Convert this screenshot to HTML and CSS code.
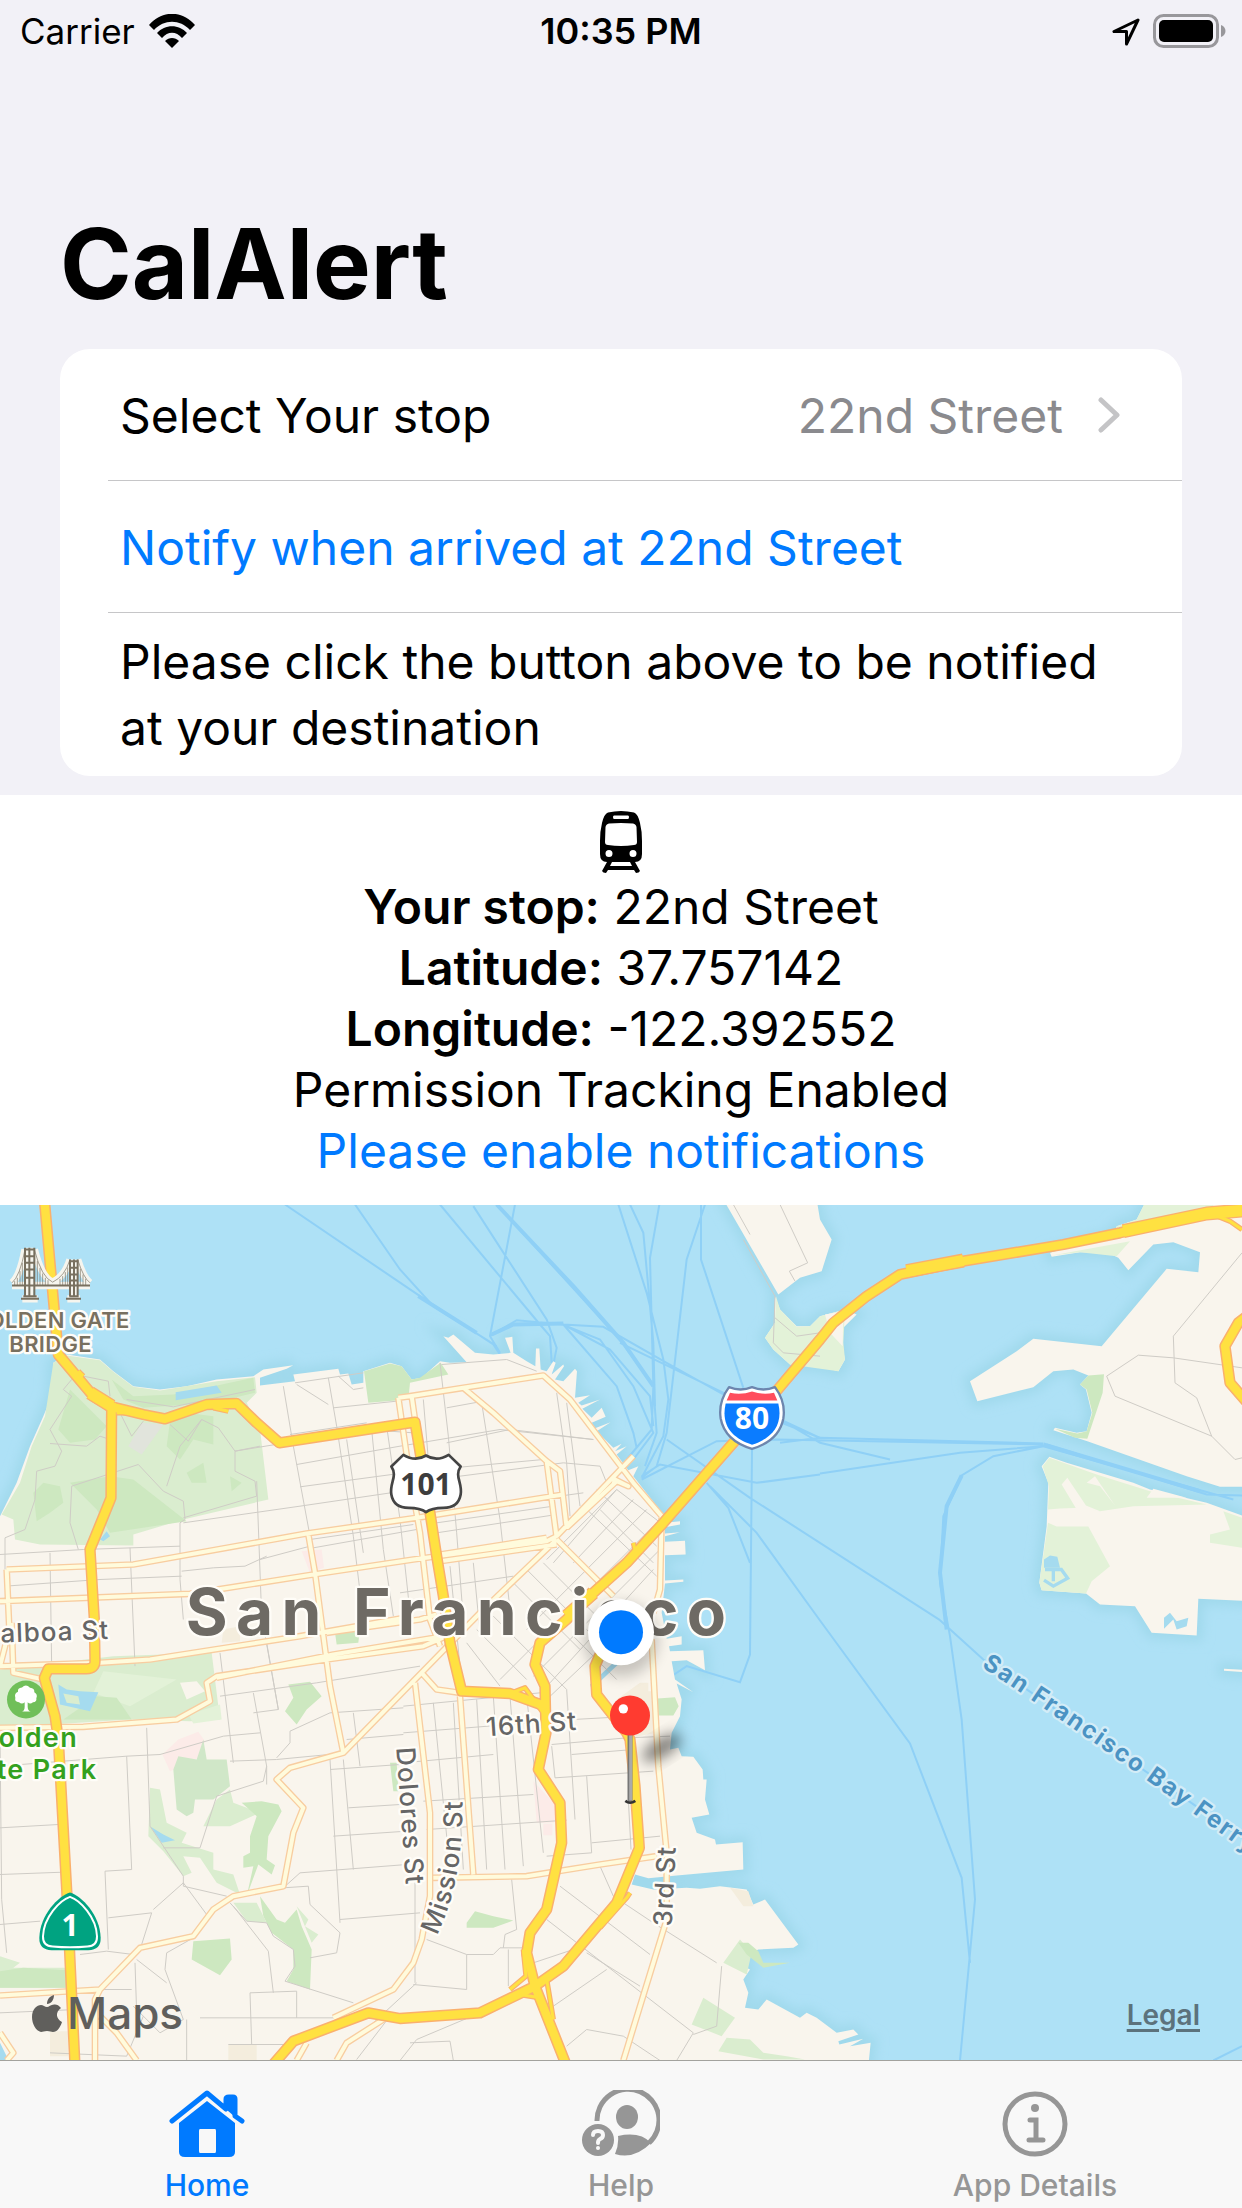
FILE: index.html
```html
<!DOCTYPE html>
<html lang="en">
<head>
<meta charset="utf-8">
<meta name="viewport" content="width=device-width, initial-scale=1">
<title>CalAlert</title>
<link rel="stylesheet" href="styles.css">
</head>
<body>
<div class="app">
  <header class="status-bar">
    <div class="status-left">
      <span>Carrier</span>
      <svg class="wifi" viewBox="0 0 46 34" aria-hidden="true">
        <path d="M0 11C13-4 33-4 46 11L41 16C31 5 15 5 5 16Z"/>
        <path d="M8 19C16 10 30 10 38 19L33 24C27 17 19 17 13 24Z"/>
        <path d="M16 27C20 23 26 23 30 27L23 34Z"/>
      </svg>
    </div>
    <time class="status-time">10:35 PM</time>
    <div class="status-right">
      <svg class="location" viewBox="0 0 29 29" aria-hidden="true"><path d="M26 3 2 14.500H14.500V27Z"/></svg>
      <svg class="battery" viewBox="0 0 73 34" aria-hidden="true">
        <rect class="battery-shell" x="1.500" y="1.500" width="63" height="31" rx="9"/>
        <rect x="6" y="6" width="54" height="22" rx="5"/>
        <path class="battery-tip" d="M68 11C74 13 74 21 68 23Z"/>
      </svg>
    </div>
  </header>

  <main class="content">
    <section class="form-area">
      <h1>CalAlert</h1>
      <div class="card">
        <a class="row row-link" href="#stops">
          <span>Select Your stop</span>
          <span class="row-value">22nd Street
            <svg class="chevron" viewBox="0 0 22 36" aria-hidden="true"><path d="M3 3 19 18 3 33"/></svg>
          </span>
        </a>
        <button class="row row-action" type="button">Notify when arrived at 22nd Street</button>
        <p class="row row-note">Please click the button above to be notified at your destination</p>
      </div>
    </section>

    <section class="details">
      <svg class="train" viewBox="0 0 42 62" aria-hidden="true">
        <path fill-rule="evenodd" d="M8 1.500Q21-1.500 34 1.500Q38 3 40 12Q42 20 42 30V43Q42 51 35 51L40 60Q39 62 36 62L34 59H8L6 62Q3 62 2 60L7 51Q0 51 0 43V30Q0 20 2 12Q4 3 8 1.500ZM14 4.500Q13 4.500 13 6Q13 8 14 8H28Q29 8 29 6Q29 4.500 28 4.500ZM9 12.500Q6 13 5.500 16L5 31Q5 34 8 34Q21 36 34 34Q37 34 37 31L36.500 16Q36 13 33 12.500Q21 11.500 9 12.500ZM9 39A3.500 3.500 0 1 0 9 46A3.500 3.500 0 1 0 9 39ZM33 39A3.500 3.500 0 1 0 33 46A3.500 3.500 0 1 0 33 39ZM12 51 10 55H32L30 51Z"/>
      </svg>
      <p><b>Your stop:</b> 22nd Street</p>
      <p><b>Latitude:</b> 37.757142</p>
      <p><b>Longitude:</b> -122.392552</p>
      <p>Permission Tracking Enabled</p>
      <button class="text-button" type="button">Please enable notifications</button>
    </section>

    <section class="map" aria-label="Map">
      <svg class="map-canvas" viewBox="0 15 3726 2568" preserveAspectRatio="xMidYMid slice" role="img" aria-label="Map of San Francisco">
        <defs>
          <filter id="coast" x="-5%" y="-5%" width="110%" height="110%"><feGaussianBlur stdDeviation="16"/></filter>
          <filter id="soft" x="-60%" y="-60%" width="220%" height="220%"><feGaussianBlur stdDeviation="20"/></filter>
          <path id="land" d="M0 950 50 850 90 740 130 650 155 590 160 490 200 465 300 480 340 515 400 560 480 570 560 560 650 540 760 530 790 510 880 497 860 508 780 535 780 558 885 545 880 525 1015 508 1020 525 1045 522 1055 555 1090 550 1090 515 1170 490 1205 500 1235 540 1265 535 1320 485 1350 490 1400 488 1330 410 1345 415 1360 405 1425 460 1480 465 1532 460 1515 415 1537 412 1540 460 1580 485 1606 500 1608 447 1618 447 1622 510 1640 515 1660 485 1667 490 1655 525 1690 495 1692 500 1665 540 1690 545 1725 508 1731 515 1725 595 1770 587 1735 610 1745 618 1800 600 1747 628 1775 655 1805 625 1817 652 1775 670 1785 686 1832 668 1790 695 1840 745 1865 733 1845 755 1880 740 1850 765 1885 812 1915 800 1900 830 1990 945 1995 970 2040 965 2040 975 1995 983 1995 1002 2040 998 1995 1010 1995 1027 2055 1024 2057 1065 1995 1067 1995 1143 2050 1140 2050 1147 1995 1152 1985 1240 2000 1318 2045 1310 2045 1335 2007 1340 2010 1355 2110 1352 2115 1412 2060 1382 2015 1385 2025 1440 2080 1478 2030 1452 2045 1500 2040 1550 2015 1600 2010 1650 2035 1645 2045 1670 2080 1672 2108 1710 2110 1740 2120 1740 2115 1800 2128 1845 2075 1855 2090 1900 2145 1920 2148 1935 2228 1928 2230 2010 2030 2028 1945 2036 1905 2025 1895 2055 1960 2070 2060 2065 2100 2068 2160 2060 2240 2070 2260 2115 2295 2100 2395 2235 2380 2245 2275 2250 2235 2270 2210 2290 2250 2310 2230 2340 2245 2380 2235 2425 2275 2430 2300 2400 2400 2455 2420 2440 2450 2455 2510 2500 2560 2490 2575 2505 2515 2525 2518 2535 2590 2518 2550 2540 2612 2530 2605 2600-60 2600-60 950ZM2170 0 2450 0 2460 60 2495 120 2465 215 2400 235 2335 285ZM2325 290 2340 330 2390 380 2430 380 2460 350 2535 330 2570 345 2530 385 2525 430 2535 480 2515 515 2460 500 2370 495 2320 450 2295 415 2325 370ZM3440 0 3410 60 3350 80 3340 105 3150 160 3155 172 3240 158 3320 158 3355 175 3385 212 3460 135 3520 128 3600 158 3595 218 3500 208 3305 440 3100 418 3050 455 2910 545 2932 605 3100 563 3160 515 3220 510 3265 528 3240 555 3258 570 3275 640 3260 695 3230 700 3165 685 3160 692 3262 725 3560 830 3660 862 3760 862 3760 0ZM3148 772 3200 790 3400 850 3450 870 3620 910 3760 960 3760 1205 3595 1198 3590 1308 3455 1300 3405 1220 3300 1215 3258 1182 3125 1172 3118 1150 3140 980 3145 850 3125 800ZM3672 1408 3760 1412V1420L3672 1414Z"/>
        </defs>
        <rect class="water" width="3726" height="2600"/>
        <use href="#land" class="coast-shade" filter="url(#coast)"/>

        <g class="ferry">
          <path d="M855 15 1260 290 1480 435 1500 465M1065 15 1200 210 1300 320 1490 440M1320 15 1620 375 1650 410 1655 490M1420 20 1640 360 1670 445 1655 520M1545 15 1470 410 1500 460M1470 410 1550 362 1690 375 1810 382 2000 490 2170 585M1490 15 1860 420 1960 560 1970 700 1935 800M1690 375 1830 450 1950 590 1960 680M1690 375 1850 560 1900 700 1910 745M1700 380 1800 420 1900 560 1960 700 1900 780M1860 430 2160 575 2460 715M1855 15 1940 280 1990 480 2005 600 1990 710 1925 835M1890 15 1930 100 1960 430 1965 620M1978 15 1950 175 1960 560 1955 690 1880 780M2103 15 2103 180 2230 565M2115 15 2060 180 2000 700 1970 800 1925 835M1925 840 2150 725 2330 720 3130 735M1925 830 1980 795 2270 850 2460 825M2000 720 2250 895 2820 1262M2120 850 2185 925 2250 1090M2130 860 2270 1000 2460 1263 2730 1632 2885 2035 2910 2290M2256 750 2250 1365 2220 1448 2060 1400 2000 1440M2340 730 2460 715 3130 732M2340 660 2460 730 2670 780M2320 660 2460 715M2460 822 2880 760 3130 740M3140 735 3620 885 3726 888M3130 740 3700 900M3130 740 2980 770 2885 828 2830 950 2820 1150 2850 1310 2885 1560 2925 2100 2880 2583M2820 1262 2950 1380M2950 1380 3726 1915M3640 2583 3726 2540"/>
          <path class="ferry-wide" d="M1490 15 1720 260 1870 430 1960 560M1255 290 1430 400M1475 405 1540 375 1690 372M3130 735 3600 875M2885 828 2840 920 2820 1120 2840 1290"/>
        </g>

        <use href="#land" class="land"/>

        <g class="park">
          <path class="g1" d="M45 1020 40 960 5 945 60 850 95 740 135 650 160 490 200 468 300 482 340 517 400 562 480 573 650 545 765 533 770 580 740 610 780 690 805 900 550 960 400 1005V1038L120 1035Z"/>
          <path class="g2" d="M1092 515 1170 492 1205 500 1235 540 1260 535 1322 490 1345 525 1230 550 1225 600 1105 610Z"/>
          <path class="g2" d="M210 570 260 620 320 680 285 720 210 730 175 690ZM510 665 560 640 640 650 640 735 580 720 540 780 500 740ZM210 850 330 830 400 840 560 965 330 1000 290 930ZM100 880 130 850 180 860 190 910 150 940 110 965ZM335 540 400 590 520 585 640 560 760 535 765 580 640 610 430 625 370 600ZM560 820 610 790 620 850 575 850ZM690 830 725 850 695 875Z"/>
          <path class="gray" d="M385 740 425 670 490 675 425 765Z"/>
          <path class="pool" d="M527 578 650 558 665 580 527 602ZM300 1020 320 995 330 1010 310 1025Z"/>
          <path class="g1" d="M0 1410 340 1370 635 1360 660 1560 570 1565 390 1560 0 1585Z"/>
          <path class="g4" d="M310 1415 530 1440 390 1520 280 1480ZM565 1545 660 1515 665 1560 580 1572Z"/>
          <path class="land" d="M540 1450 590 1445 615 1475 560 1500Z"/>
          <path class="g2" d="M190 1560 290 1490 350 1495 395 1560Z"/>
          <path class="pool" d="M175 1455 200 1470 240 1475 295 1478 270 1535 180 1515Z"/>
          <path class="g1" d="M190 1482 235 1490 240 1515 200 1510Z"/>
          <path class="g2" d="M865 1455 930 1447 965 1490 920 1530 890 1575 855 1535 880 1495ZM1005 1300 1080 1285 1075 1330 1010 1335ZM1170 1690 1190 1690 1195 1775 1180 1775ZM580 2225 690 2217 695 2280 660 2327 575 2280ZM1400 2170 1425 2135 1480 2150 1540 2163 1480 2185 1400 2185Z"/>
          <path class="pink" d="M487 1665 535 1620 595 1597 615 1625 595 1675 510 1715ZM905 1055 965 1050 972 1105 930 1120ZM1600 1745 1680 1830 1662 1870 1610 1870ZM1630 1873H1657V1907H1630Z"/>
          <path class="g3" d="M520 1710 535 1670 590 1680 610 1620 620 1680 680 1680 690 1760 640 1800 585 1800 580 1840 560 1850 530 1830Z"/>
          <path class="g1" d="M450 1765 480 1770 500 1870 560 1900 545 1930 640 1960 640 2010 700 2025 720 2085 650 2050 600 1975 550 1970 575 2020 550 2030 490 1955 445 1910ZM610 1880 650 1800 690 1770 700 1810 780 1840 690 1880Z"/>
          <path class="pool" d="M452 1882 490 1905 525 1922 485 1930Z"/>
          <path class="g2" d="M725 1810 785 1805 835 1815 845 1835 805 1910 800 1980 825 1997 815 2025 775 1995 740 2090 760 2000 730 2005 730 1970 750 1960 750 1910 770 1850ZM780 2090 830 2160 855 2170 890 2130 905 2180 935 2250 930 2370 860 2345 880 2310 880 2250 815 2200 790 2150Z"/>
          <path class="g1" d="M700 2110 740 2165 800 2170 770 2110ZM890 2120 925 2160 915 2180 955 2205 935 2230ZM0 2270 60 2290 40 2305 200 2305V2365H0ZM2170 2290 2220 2220 2255 2260 2240 2325ZM2075 2475 2110 2395 2205 2455 2165 2510ZM2155 2555 2180 2515 2250 2520 2290 2560 2360 2570 2415 2580H2290Z"/>
          <path class="g2" d="M0 2315 70 2305 200 2312V2365H0ZM2215 2230 2245 2230 2275 2255 2290 2290 2370 2290 2290 2305 2240 2265ZM1973 1497 2025 1493 2036 1520 2020 1548 1973 1548Z"/>
          <path class="sand" d="M1920 1450H1945V1475H1970V1600L1890 1615 1850 1500ZM150 2495H205V2570H150ZM685 2535H770V2583H685ZM670 1290 720 1280V1325L665 1330ZM2190 2065 2245 2075 2260 2120 2230 2120Z"/>
          <path class="pool" d="M1770 1455 1850 1380 1860 1390 1775 1470Z"/>
          <path class="g4" d="M2328 290 2340 330 2390 382 2430 380 2460 350 2535 330 2530 430 2535 480 2515 515 2370 495 2320 450 2295 415 2325 370ZM3440 0 3410 60 3350 80 3350 100 3640 50V0ZM3155 168 3390 125 3350 170 3240 158ZM3148 775 3128 800 3147 860 3144 930 3180 927 3240 925 3300 935 3400 920 3620 915 3450 875 3290 825ZM3144 970 3170 981 3265 981 3330 1100 3275 1145 3258 1182 3125 1172 3118 1150ZM3670 935 3726 955V1045L3630 1030V1005L3690 990Z"/>
          <path class="land" d="M3185 855 3202 835 3258 918 3300 935 3230 930ZM3260 850 3285 830 3345 918 3300 860ZM2475 345 2530 335 2528 440 2490 400ZM3460 868 3560 895 3440 895Z"/>
          <path class="g2" d="M3265 528 3312 524 3308 580 3262 718 3225 715 3165 688 3232 702 3260 695 3277 640 3260 570 3240 555Z"/>
          <path class="pool" d="M3132 1080 3150 1068 3172 1072 3180 1105 3132 1105ZM3155 1110H3165V1145H3155ZM3492 1255 3510 1240 3530 1265 3565 1255 3560 1280 3530 1290 3520 1260 3492 1288ZM0 2530 20 2570 18 2583H0Z"/>
          <path class="pond-rim" d="M3132 1142 3160 1160 3203 1136 3184 1110 3135 1110"/>
        </g>

        <g class="street">
          <path d="M215 540 190 570 215 590 150 690 185 755 165 800 110 815 105 900 75 990 15 1015V1110M215 540 250 530 325 545 330 590M150 732 260 740 300 710 330 720M215 860 415 795 490 875 550 905 555 960 540 970 540 1140 550 1260M215 860 210 970 235 1050M500 860 540 740 605 660 655 685 705 755 705 815 765 845 770 890 550 955M360 640 395 710 430 665M510 675 565 725 605 660M705 755 780 740M380 600 520 622 765 570"/>
          <path d="M0 1065 250 1050 540 1040M15 1160 300 1140 545 1130M150 1060 155 1400M390 1045 405 1400M770 845 785 1250 835 1530M850 560 880 740 930 1010M890 555 985 615M985 535 1010 680 1060 1010 1090 1260M885 550 1090 520M1015 530 1060 570 1090 565M1000 625 1190 605M870 705 1100 670M890 795 1200 740 1500 690 1780 720M900 862 1250 815 1630 780M550 970 900 920 1240 870M1040 720 1090 1060M1115 690 1150 1050 1180 1250M1160 680 1200 960 1230 1240M930 1020 1240 975M940 1045 1250 990M780 1080 930 1040M545 1115 640 1105M640 1105 735 1100 800 1070"/>
          <path d="M705 755 1100 690 1240 700M1320 490 1345 710 1370 1000 1390 1260M1270 600 1300 960M1445 610 1500 960 1530 1230M1340 625 1450 605M1325 495 1520 480 1610 515M1670 580 1700 790 1710 950M1700 610 1740 920M1380 830 1690 790 1800 800 1820 850M1340 730 1530 690 1780 720M1390 930 1750 880M1310 970 1660 920M1310 1000 1670 945M1350 1100 1380 1400M1420 1090 1440 1300M1200 1180 1540 1130"/>
          <path d="M1660 1090 1850 870 1995 980M1700 1060 1930 1290M1750 920 1970 1130M1800 930 1960 1090M1630 1090 1860 1320M1580 1110 1790 1320M1540 1150 1740 1350M1790 870 1970 1040M1850 870 1640 1080M1900 900 1720 1090M1940 930 1580 1290M1960 980 1500 1440M1980 1050 1600 1430M1960 1110 1650 1450M1480 1250 1700 1470M1430 1290 1580 1440M1400 1330 1500 1460M1820 1330 1640 1500M1720 1310 1850 1440"/>
          <path d="M1210 1520 1620 1480M1210 1600 1720 1560 1900 1550M1210 1690 1480 1665M1270 1805 1600 1785M1280 1890 1700 1862M1300 1510 1350 2010M1360 1510 1390 2010M1430 1500 1460 2010M1480 1490 1515 2010M1530 1490 1570 2000M1580 1490 1630 1960M1700 1470 1725 1860M1655 1640 1665 1735 1960 1715M1655 1635 1880 1615 2010 1610M1715 1665 1900 1650M1760 1730 1775 1960 1640 1970M1775 1930 1980 1910M1885 1800 1893 1950"/>
          <path d="M660 1490 950 1450 1260 1400M670 1610 780 1600M690 1685 830 1680 1040 1660M660 1360 700 1690M760 1480 800 1700 800 1755M800 1330 835 1530 760 1540M830 1675 870 1630V1595L990 1540 1210 1525M1060 1540 1080 1700M1040 1620 1210 1605M990 1680 1020 2170M1030 1680 1060 2010M990 1710 1200 1695M1045 1825 1200 1815M1000 1910 1220 1895M850 2065 900 2020 1220 1995M1020 2160 1260 2140"/>
          <path d="M0 1885 175 1875M0 2025 190 2018M0 2175 120 2165M380 1670 395 2010 315 2015 325 2250M0 1700 380 1670 480 1665 670 1610M440 1585 450 1880 550 2030V2060L680 2090M240 2265 320 2255 400 2265M325 2155 455 2140 425 2235M460 2130 550 2050 620 2145M490 1945 600 1945 650 1790 790 1745 800 1700M690 2110 740 2165 800 2170 820 2210 880 2250 885 2300 855 2345 1060 2410M700 2120 805 2255 820 2380M850 2065 925 2060 930 2115 1020 2200 1010 2260 930 2275M580 2215 500 2260 495 2310 550 2460 480 2500 400 2420M410 2280 500 2350M300 2370 395 2370M750 2380 890 2375V2455M600 2455 1080 2455M750 2380 755 2535M560 2460V2583M405 2290 410 2440M0 2440 230 2430M150 2560 380 2570 430 2450M0 1600 5 2100 20 2260M685 2535 890 2535"/>
          <path d="M1280 2220 1400 2265 1480 2265 1500 2245 1580 2245M1400 2265 1400 2370 1240 2355M1535 2040 1550 2190 1515 2205 1510 2245M1525 2250 1525 2360M1600 2290 1720 2250M1640 2160 2080 2500 2030 2583M1680 2060 1950 2265M1800 2000 1840 2090 1960 2170 2150 2290M1760 2260 1920 2360M2165 2300 2150 2480 2080 2505M1660 2420 1820 2310M1440 2440 1250 2520 1200 2583M1230 2530 1350 2525 1360 2583M1700 2540 1760 2490 1870 2510 1980 2583M1120 2470 1250 2350M1070 2580 1170 2450M1245 2040V2350"/>
          <path d="M2200 15 2250 105M2230 120 2325 290 2320 430 2350 460 2460 470M2340 15 2423 190 2368 215 2385 245M2325 355 2390 410 2460 400M3726 160 3520 410 3525 550 3590 595 3635 710 3345 590 3320 530 3415 467 3520 475 3726 505M3635 710 3705 780 3726 775"/>
        </g>

        <defs>
          <path id="arterials" d="M0 1205 570 1183 940 1125 1240 1080 1640 1025 1670 1010 1900 770M20 1110 400 1095 920 1002 1250 955 1690 885M20 1110 28 1290 0 1400 300 1390 450 1380 900 1310 1240 1250M35 1270 40 1420 130 1440M1195 595 1230 590 1390 565 1630 528 1710 600 1900 850 1985 950 1980 1170 1960 1240M1195 595 1225 800 1260 1000 1290 1260 1320 1340M1235 590 1265 800M925 1005 945 1120 990 1460 1030 1660M1390 565 1480 640 1640 785 1680 815 1700 985M1640 785 1670 1015M0 1585 250 1582 530 1560 630 1505 620 1450 650 1430 980 1380 1270 1340 1340 1310M650 1435 1000 1365 1330 1310M980 1300 1260 1260 1310 1245M1320 1085 1670 1035M1320 1065 1640 1015M1670 1020 1840 1190M1670 1020 1440 1240 1030 1660 870 1705 830 1740 910 1825 880 1900 850 2060 700 2090 640 2130 580 2210 420 2245 300 2370 0 2388M1265 1420 1310 1470 1380 1480M1840 855 1845 840 1885 860 1850 845 1700 985M1245 1450 1290 1840 1290 2090 1265 2220 1240 2290 1180 2370 1000 2455M1380 1490 1420 2025M1300 2035 1580 2030 1800 1995 1970 1970M1955 1320 1975 1700 2000 1960 2000 2160 1870 2583M300 2370 285 2400 285 2583M300 2450 350 2500 410 2583M0 2500 40 2560 20 2583M1010 2583 1040 2530 1150 2460M890 2583 920 2530"/>
          <path id="ramps" d="M235 515 250 530M640 625 685 635M350 640 440 640M1530 1482 1575 1465 1630 1540M1900 1030 1905 1050M1890 2080 1880 2095 1800 2185M1570 2250 1578 2330 1530 2370M1640 2340 1660 2460M1560 2385 1620 2395M3640 45 3690 65 3726 90"/>
          <path id="highways" d="M133 0 160 300 175 465 280 590 335 622 430 645 495 658 620 615 710 612 770 670 838 730 1245 668 1262 770 1290 940 1310 1070 1330 1190 1350 1330 1385 1475 1530 1482 1635 1520M335 610 333 895 270 1050 283 1260 285 1385Q285 1408 260 1408H145L133 1435 165 1550 175 1620 200 2070 225 2600M3760 30 3620 40 3360 100 3190 135 2890 185 2700 225 2600 290 2500 370 2460 420 2350 550 2200 730 1990 970 1880 1090 1780 1180 1700 1260 1620 1330 1605 1395 1635 1460 1638 1600 1615 1710 1680 1810 1685 1930 1640 2130 1590 2200 1580 2260 1605 2360 1700 2600M1800 1365 1785 1400 1790 1485 1880 1600 1890 1620 1905 1760 1918 1945 1850 2110 1690 2300 1605 2360 1440 2440 1200 2457 1105 2440 880 2525 815 2600M3760 335 3715 370 3675 440 3690 550 3760 630"/>
          <path id="broad" d="M3760 30 3620 42 3370 95M2720 215 2890 183M1780 1180 1700 1250M270 580 335 620"/>
        </defs>
        <use href="#arterials" class="road-case"/>
        <use href="#arterials" class="road-fill"/>
        <use href="#ramps" class="ramp-case"/>
        <use href="#broad" class="broad-case"/>
        <use href="#highways" class="hwy-case"/>
        <use href="#ramps" class="ramp-fill"/>
        <use href="#broad" class="broad-fill"/>
        <use href="#highways" class="hwy-fill"/>

        <g class="bridge-icon">
          <path class="bridge-halo" d="M36 258H270M67 298H113M89 145V298M202 298H240M221 180V298M75 150Q60 230 36 250M103 150Q125 235 158 248Q195 230 210 180M233 180Q250 235 270 250"/>
          <path d="M36 258H270M63 298H117M70 290H110M75 145V290M88 145V290M103 145V290M75 150H103M75 170H103M75 190H103M75 210H103M75 235H103M198 298H243M210 180V290M222 180V290M233 180V290M208 290H236M210 185H233M210 205H233M210 225H233M210 243H233"/>
          <path class="cables" d="M75 150Q60 230 36 250M103 150Q125 235 158 248Q195 230 210 180M233 180Q250 235 270 250M44 245V258M52 235V258M60 215V258M67 190V258M112 185V258M120 205V258M128 222V258M136 235V258M144 242V258M180 238V258M188 230V258M196 218V258M203 204V258M241 208V258M249 225V258M257 238V258"/>
        </g>

        <g class="labels">
          <g class="landmark"><text x="389" y="385" text-anchor="end">GOLDEN GATE</text><text x="152" y="458" text-anchor="middle">BRIDGE</text></g>
          <text class="city" x="557" y="1305">San Francisco</text>
          <text class="road-name" x="328" y="1318" text-anchor="end" transform="rotate(-2 328 1318)">Balboa St</text>
          <g class="park-name"><text x="234" y="1643" text-anchor="end">Golden</text><text x="292" y="1737" text-anchor="end">Gate Park</text></g>
          <text class="road-name" x="1460" y="1610" transform="rotate(-4 1460 1610)">16th St</text>
          <text class="road-name" x="1189" y="1645" transform="rotate(86 1189 1645)">Dolores St</text>
          <path id="mission" class="guide" d="M1310 2208Q1400 2030 1385 1740"/>
          <text class="road-name"><textPath href="#mission">Mission St</textPath></text>
          <text class="road-name" x="2015" y="2182" transform="rotate(-87 2015 2182)">3rd St</text>
          <path id="ferry-line" class="guide" d="M2944 1402Q3310 1640 3850 2040"/>
          <text class="ferry-name"><textPath href="#ferry-line">San Francisco Bay Ferry</textPath></text>
        </g>

        <g>
          <circle cx="78" cy="1500" r="57" fill="#70bf59"/>
          <path fill="#fff" d="M66 1536Q74 1534 74 1522V1508Q66 1516 57 1508Q43 1508 46 1495Q42 1482 54 1477Q52 1465 66 1464Q78 1452 90 1465Q104 1466 103 1478Q114 1484 109 1496Q111 1507 99 1508Q90 1516 83 1508V1522Q83 1534 92 1536Z"/>
          <path fill="#00a381" d="M210 2079C245 2090 300 2145 302 2215Q303 2252 265 2252H155Q117 2252 118 2215C120 2145 175 2090 210 2079Z"/>
          <path fill="none" stroke="#fff" stroke-width="6" d="M210 2092C240 2102 289 2153 291 2210Q292 2240 262 2241Q210 2246 158 2241Q128 2240 129 2210C131 2153 180 2102 210 2092Z"/>
          <text class="shield-text" x="210" y="2209">1</text>
          <path fill="#fff" stroke="#444" stroke-width="8" stroke-linejoin="round" d="M1210 766Q1246 788 1278 768Q1310 788 1346 766L1382 801C1362 830 1388 850 1382 885Q1375 925 1330 925Q1295 925 1278 938Q1261 925 1226 925Q1181 925 1174 885C1168 850 1194 830 1174 801Z"/>
          <text class="shield-text shield-dark" x="1278" y="885">101</text>
          <path fill="#fff" stroke="#6d86ae" stroke-width="7" stroke-linejoin="round" d="M2187 563Q2222 577 2256 563Q2290 577 2325 563C2345 590 2355 625 2350 657C2340 710 2300 735 2256 748C2212 735 2172 710 2162 657C2157 625 2167 590 2187 563Z"/>
          <path fill="#ff4d5d" d="M2190 580Q2225 587 2256 576Q2287 587 2322 580L2332 603H2180Z"/>
          <path fill="#0b7cff" d="M2177 612H2335C2350 680 2315 716 2256 736C2197 716 2162 680 2177 612Z"/>
          <text class="shield-text" x="2256" y="689">80</text>
        </g>

        <g>
          <circle cx="1863" cy="1320" r="112" opacity=".2" filter="url(#soft)"/>
          <circle cx="1863" cy="1298" r="99" fill="#fff"/><circle cx="1863" cy="1298" r="66" fill="#007aff"/>
          <ellipse cx="1985" cy="1645" rx="66" ry="26" transform="rotate(-32 1985 1645)" opacity=".5" filter="url(#soft)"/>
          <path d="M1876 1804Q1890 1815 1906 1804" fill="none" stroke="#333" stroke-width="8"/>
          <path d="M1890 1600V1805" stroke="#777" stroke-width="15"/><path d="M1892 1604V1803" stroke="#aaa" stroke-width="9"/>
          <circle cx="1890" cy="1548" r="60" fill="#ff3b30"/><circle cx="1870" cy="1528" r="14" fill="#fff"/>
        </g>
      </svg>
      <div class="map-brand">
        <svg viewBox="0 0 30 37" aria-hidden="true"><path d="M22 0C22 5 19 9 15 9C15 4 18 1 22 0ZM15 12C17 12 19 9 23 9.500C25 9.500 27 10.500 29 13C23 17 24 24 30 27C28 33 25 37 21 37C19 37 18 36 15 36C12 36 11 37 9 37C4 36 0 29 0 22C0 14 5 10 9 10C11 10 13 12 15 12Z"/></svg>
        <span>Maps</span>
      </div>
      <a class="legal" href="#legal">Legal</a>
    </section>
  </main>

  <nav class="tab-bar" aria-label="Main">
    <a class="tab tab-active" href="#home" aria-current="page">
      <svg viewBox="0 0 76 68" aria-hidden="true">
        <path d="M3 31 38 3 57 19V9Q57 7 60 7H64Q66 7 66 9V26L73 31" class="roof"/>
        <path d="M58 8H66V27L58 20Z"/>
        <path fill-rule="evenodd" d="M38 11 66 33V62Q66 67 60 67H16Q10 67 10 62V33ZM31 39Q30 39 30 41V61Q30 63 31 63H46Q47 63 47 61V41Q47 39 46 39Z"/>
      </svg>
      <span>Home</span>
    </a>
    <a class="tab" href="#help">
      <svg viewBox="0 0 78 68" aria-hidden="true">
        <path class="ring" d="M15 31A31 31 0 1 1 67 53"/>
        <ellipse cx="45" cy="27" rx="11" ry="12"/>
        <path d="M36 46Q58 41 69 53Q52 70 33 64Q37 55 36 46Z"/>
        <circle cx="16" cy="50" r="16"/>
        <path class="question" d="M11 45Q11 41 16 41Q21 41 21 45Q21 48 18 49Q16 50 16 53"/><circle class="question-dot" cx="16" cy="58" r="2"/>
      </svg>
      <span>Help</span>
    </a>
    <a class="tab" href="#details">
      <svg viewBox="0 0 66 68" aria-hidden="true">
        <circle class="ring" cx="33" cy="34" r="30"/>
        <circle cx="33" cy="18" r="4"/>
        <path class="ring" d="M28 30H34V50M27 50H41" stroke-linecap="round"/>
      </svg>
      <span>App Details</span>
    </a>
  </nav>
</div>
</body>
</html>
```
FILE: styles.css
```css
* { box-sizing: border-box; }

body {
  margin: 0;
  background: #fff;
  color: #000;
  font-family: Inter, "Liberation Sans", sans-serif;
  font-size: 48px;
}

h1, p { margin: 0; }
a { color: inherit; text-decoration: none; }
button { border: 0; padding: 0; background: none; font: inherit; color: #007aff; cursor: pointer; }

.app { min-height: 100vh; display: flex; flex-direction: column; }

/* Status bar */
.status-bar {
  display: grid;
  grid-template-columns: 1fr auto 1fr;
  align-items: center;
  height: 62px;
  padding: 0 16px;
  background: #f2f1f7;
  font-size: 36px;
}
.status-left, .status-right { display: flex; align-items: center; }
.status-left { gap: 14px; padding-left: 4px; font-size: 35px; }
.status-right { justify-content: flex-end; gap: 12px; }
.status-time { font-weight: 600; }
.wifi { width: 46px; height: 34px; }
.location { width: 29px; height: 29px; fill: none; stroke: #000; stroke-width: 3; stroke-linejoin: round; }
.battery { width: 73px; height: 34px; }
.battery-shell { fill: none; stroke: #98979b; stroke-width: 3; }
.battery-tip { fill: #98979b; }

.content { flex: 1; display: flex; flex-direction: column; }

/* Form */
.form-area { padding: 142px 60px 19px; background: #f2f1f7; }
h1 { margin-bottom: 25px; font-size: 97px; line-height: 120px; font-weight: 700; }
.card { border-radius: 30px; background: #fff; overflow: hidden; }
.row {
  display: flex;
  align-items: center;
  width: 100%;
  min-height: 132px;
  padding: 0 62px 0 60px;
  text-align: left;
}
.row-link, .row-action { background: linear-gradient(#c6c6c8, #c6c6c8) 48px 100% / 100% 1px no-repeat; }
.row-link { justify-content: space-between; }
.row-value { display: flex; align-items: center; gap: 35px; color: #8a8a8e; }
.chevron { width: 22px; height: 36px; fill: none; stroke: #c4c4c6; stroke-width: 5; stroke-linecap: round; stroke-linejoin: round; }
.row-note { display: block; padding: 16px 60px 15px; line-height: 66px; }

/* Stop details */
.details { display: flex; flex-direction: column; align-items: center; padding: 16px 20px 24px; line-height: 61px; text-align: center; }
.details b { font-weight: 600; }
.train { width: 42px; height: 62px; margin-bottom: 3px; }
.text-button { line-height: 61px; }

/* Map */
.map { position: relative; flex: 1; min-height: 600px; overflow: hidden; background: #aee1f6; }
.map-canvas { position: absolute; inset: 0; width: 100%; height: 100%; }
.water { fill: #aee1f6; }
.coast-shade { fill: #a0d9ec; stroke: #a0d9ec; stroke-width: 36; }
.land { fill: #f9f5ed; }
.ferry { fill: none; stroke: #8fd0f6; stroke-width: 6; }
.ferry-wide { stroke-width: 12; }
.g1 { fill: #daedcf; }
.g2 { fill: #cde8c0; }
.g3 { fill: #d0e7c8; }
.g4 { fill: #e3f2d8; }
.gray { fill: #e1e4dc; }
.pool { fill: #a5dbef; }
.pond-rim { fill: none; stroke: #a5dbef; stroke-width: 10; }
.pink { fill: #fcebe8; }
.sand { fill: #f4eddd; }
.street { fill: none; stroke: #cfccc6; stroke-width: 3; }

/* Each road is drawn twice: a wide casing, then a narrower fill */
.road-case, .road-fill, .hwy-case, .hwy-fill, .broad-case, .broad-fill, .ramp-case, .ramp-fill { fill: none; stroke-linejoin: round; }
.road-case { stroke: #f8cda0; stroke-width: 20; }
.road-fill { stroke: #fffbdc; stroke-width: 12; }
.ramp-case { stroke: #fab06d; stroke-width: 16; }
.ramp-fill { stroke: #ffe141; stroke-width: 9; }
.broad-case { stroke: #fab06d; stroke-width: 42; }
.broad-fill { stroke: #ffe141; stroke-width: 34; }
.hwy-case { stroke: #fab06d; stroke-width: 34; }
.hwy-fill { stroke: #ffe141; stroke-width: 25; }

.labels text { paint-order: stroke; stroke: #fffdf8; stroke-width: 14; stroke-linejoin: round; }
.guide { fill: none; }
.landmark { fill: #78705f; font-size: 66px; font-weight: 600; letter-spacing: 1px; }
.city { fill: #6e6a64; font-size: 192px; font-weight: 700; letter-spacing: 25px; }
.road-name { fill: #666; font-size: 78px; font-weight: 500; letter-spacing: 3px; }
.park-name { fill: #34a11e; font-size: 81px; font-weight: 600; letter-spacing: 4px; }
.labels .ferry-name { fill: #4b93c3; stroke: #d3ecf7; font-size: 72px; font-weight: 700; letter-spacing: 6px; }
.shield-text { fill: #fff; font-family: "Noto Sans", Inter, sans-serif; font-size: 90px; font-weight: 700; text-anchor: middle; }
.shield-dark { fill: #3d3d3d; }
.bridge-icon { fill: none; stroke: #78705f; stroke-width: 6; }
.bridge-icon .bridge-halo { stroke: #f6f5ee; stroke-width: 22; stroke-linejoin: round; }
.bridge-icon .cables { stroke-width: 2; }

.map-brand { position: absolute; left: 32px; bottom: 20px; display: flex; align-items: center; gap: 5px; color: #605f5c; font-size: 44px; line-height: 54px; font-weight: 500; }
.map-brand svg { width: 30px; height: 37px; fill: #605f5c; }
.legal { position: absolute; right: 42px; bottom: 28px; color: #5c727c; font-size: 28px; line-height: 34px; font-weight: 600; text-decoration: underline; text-decoration-thickness: 3px; text-underline-offset: 4px; }

/* Tab bar */
.tab-bar { display: grid; grid-template-columns: repeat(3, 1fr); height: 148px; border-top: 1px solid #a3a29e; background: #f8f8f8; }
.tab { display: flex; flex-direction: column; align-items: center; gap: 8px; padding-top: 29px; color: #969696; font-size: 30px; line-height: 38px; font-weight: 500; }
.tab svg { height: 68px; fill: currentColor; }
.tab-active { color: #007aff; }
.roof { fill: none; stroke: currentColor; stroke-width: 5; stroke-linecap: round; stroke-linejoin: round; }
.ring { fill: none; stroke: currentColor; stroke-width: 5; }
.question { fill: none; stroke: #f8f8f8; stroke-width: 4; stroke-linecap: round; }
.question-dot { fill: #f8f8f8; }
```
